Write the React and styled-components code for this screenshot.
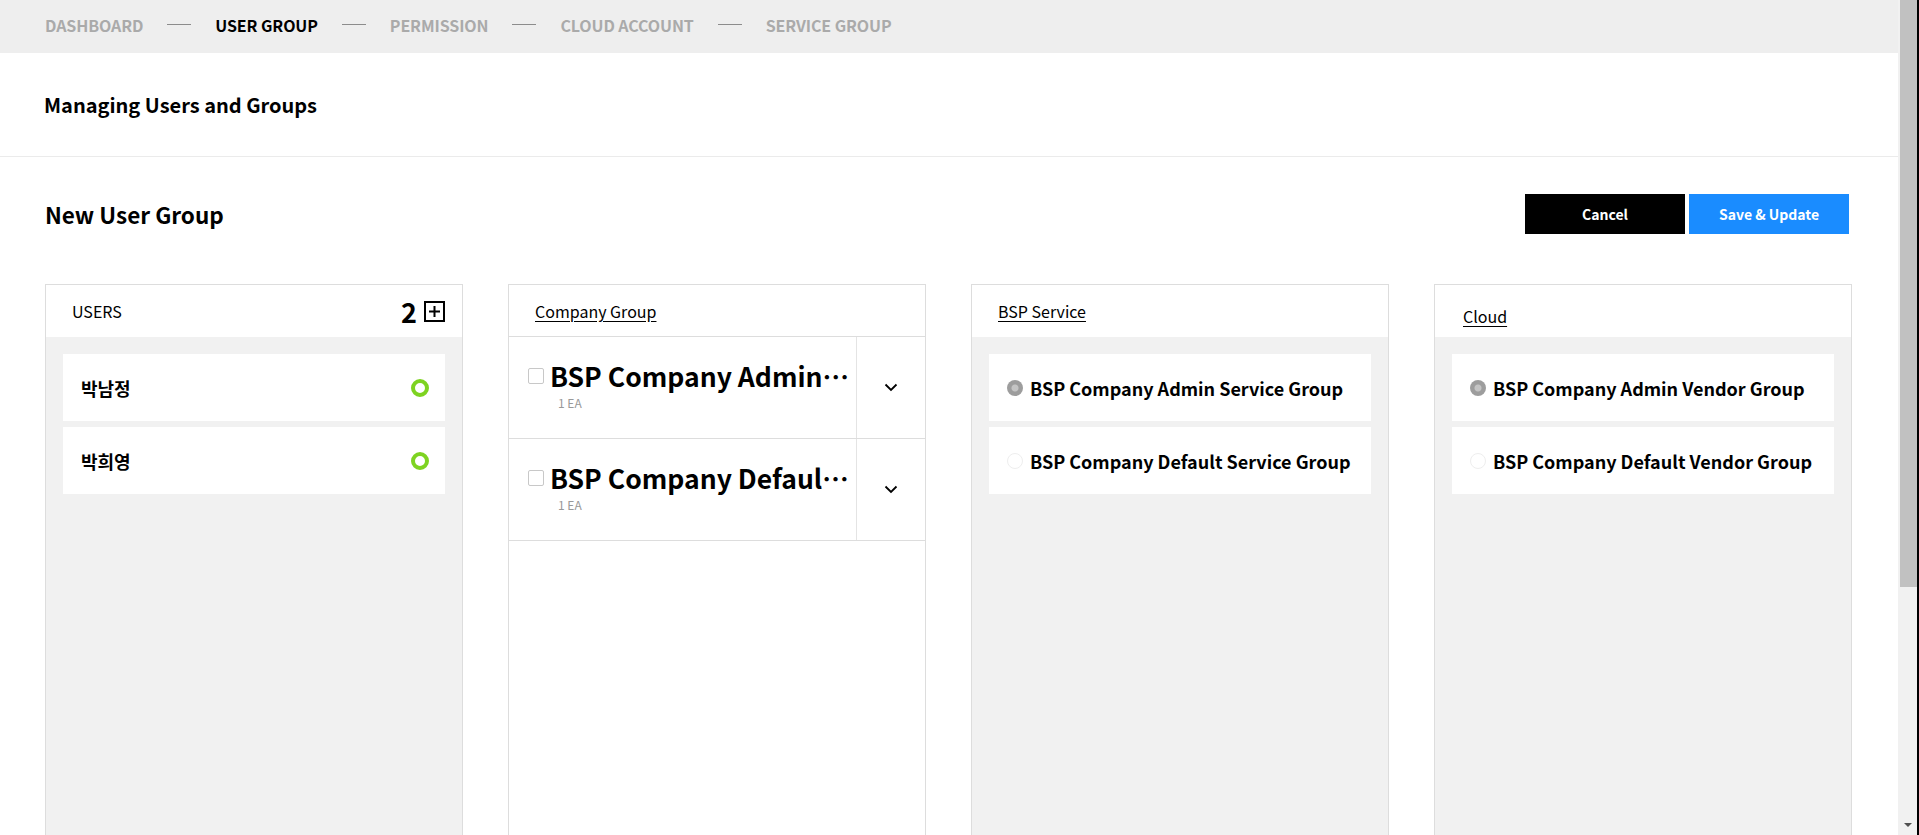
import React from 'react';
import styled, { createGlobalStyle } from 'styled-components';

const Global = createGlobalStyle`
  body {
    margin: 0;
    font-family: "Noto Sans CJK KR", "Noto Sans", sans-serif;
    color: #000;
    background: #fff;
    overflow-x: hidden;
  }
`;

const Page = styled.div`
  width: 1898px;
`;

const Nav = styled.nav`
  display: flex;
  align-items: center;
  gap: 24px;
  height: 53px;
  box-sizing: border-box;
  padding: 0 0 4px 45px;
  background: #eeeeee;
`;

const NavItem = styled.span`
  font-size: 16px;
  font-weight: 700;
  letter-spacing: -0.1px;
  color: ${p => (p.active ? '#000' : '#aaaaaa')};
`;

const NavDash = styled.span`
  width: 24px;
  height: 1px;
  background: #8c8c8c;
`;

const PageHeader = styled.header`
  display: flex;
  align-items: center;
  height: 103px;
  padding-left: 44px;
  border-bottom: 1px solid #ebebeb;
`;

const PageTitle = styled.h1`
  margin: 0;
  font-size: 20px;
  font-weight: 700;
`;

const Content = styled.main`
  padding: 37px 46px 60px 45px;
`;

const TitleRow = styled.div`
  display: flex;
  align-items: center;
  justify-content: space-between;
  padding-right: 3px;
`;

const SectionTitle = styled.h2`
  margin: 0;
  font-size: 22.5px;
  font-weight: 700;
`;

const Buttons = styled.div`
  display: flex;
  gap: 4px;
`;

const Button = styled.button`
  width: 160px;
  height: 40px;
  border: 0;
  font-family: inherit;
  font-size: 14px;
  font-weight: 700;
  color: #fff;
  background: ${p => (p.primary ? '#1a8cff' : '#000')};
`;

const Panels = styled.div`
  display: grid;
  grid-template-columns: repeat(4, minmax(0, 1fr));
  gap: 45px;
  margin-top: 50px;
`;

const Panel = styled.section`
  display: flex;
  flex-direction: column;
  height: 1560px;
  border: 1px solid #dddddd;
`;

const PanelHead = styled.div`
  display: flex;
  align-items: center;
  justify-content: space-between;
  height: 52px;
  flex-shrink: 0;
  box-sizing: border-box;
  padding: ${p => (p.low ? '10px 17px 0 28px' : '0 17px 0 26px')};
  border-bottom: ${p => (p.lined ? '1px solid #dddddd' : '0')};
  font-size: 16px;
`;

const HeadLink = styled.span`
  text-decoration: underline;
  text-underline-offset: 3px;
`;

const Counter = styled.div`
  display: flex;
  align-items: center;
  gap: 7px;
  font-size: 27px;
  font-weight: 700;
`;

const AddBox = styled.span`
  display: flex;
  align-items: center;
  justify-content: center;
  width: 17px;
  height: 17px;
  border: 2px solid #000;
`;

const GreyBody = styled.div`
  flex: 1;
  display: flex;
  flex-direction: column;
  gap: 6px;
  padding: 17px;
  background: #f1f1f1;
`;

const Card = styled.div`
  display: flex;
  align-items: center;
  justify-content: space-between;
  height: 67px;
  padding: 0 16px 0 18px;
  background: #fff;
  font-size: 18px;
  font-weight: 700;
`;

const Ring = styled.span`
  width: 10px;
  height: 10px;
  border: 4px solid #7ed321;
  border-radius: 50%;
`;

const RadioLine = styled.label`
  display: flex;
  align-items: center;
  gap: 7px;
  font-size: 18px;
  font-weight: 700;
  white-space: nowrap;
`;

const Radio = styled.span`
  flex-shrink: 0;
  width: 16px;
  height: 16px;
  border-radius: 50%;
  box-sizing: border-box;
  background: ${p =>
    p.checked
      ? 'radial-gradient(circle, #c4c4c4 0 3px, #9d9d9d 4px)'
      : '#fff'};
  border: ${p => (p.checked ? '0' : '1px solid #eeeeee')};
`;

const GroupRow = styled.div`
  display: flex;
  height: 101px;
  flex-shrink: 0;
  border-bottom: 1px solid #dddddd;
`;

const GroupMain = styled.div`
  flex: 1;
  min-width: 0;
  padding: 19px 2px 0 19px;
`;

const GroupLine = styled.div`
  display: flex;
  align-items: center;
  gap: 6px;
`;

const Check = styled.span`
  flex-shrink: 0;
  width: 14px;
  height: 14px;
  border: 1px solid #c8c8c8;
  border-radius: 2px;
`;

const GroupName = styled.span`
  font-size: 26.5px;
  font-weight: 700;
  line-height: 40px;
  white-space: nowrap;
  overflow: hidden;
  text-overflow: ellipsis;
`;

const GroupCount = styled.div`
  margin-left: 30px;
  font-size: 12px;
  line-height: 14px;
  color: #999999;
`;

const Toggle = styled.div`
  display: flex;
  align-items: center;
  justify-content: center;
  width: 68px;
  flex-shrink: 0;
  border-left: 1px solid #e4e4e4;
`;

/* browser scrollbar seen on the right edge of the capture */
const ScrollTrack = styled.div`
  position: fixed;
  top: 0;
  right: 0;
  bottom: 0;
  width: 21px;
  display: flex;
  flex-direction: column;
  justify-content: space-between;
  box-sizing: border-box;
  padding-left: 2px;
  background: #f1f1f1;
  border-right: 2px solid #000;
`;

const ScrollThumb = styled.div`
  height: 587px;
  background: #c1c1c1;
`;

const ScrollArrow = styled.div`
  align-self: center;
  margin: 0 0 8px -2px;
  width: 0;
  height: 0;
  border-left: 4px solid transparent;
  border-right: 4px solid transparent;
  border-top: 4px solid #505050;
`;

const navItems = ['DASHBOARD', 'USER GROUP', 'PERMISSION', 'CLOUD ACCOUNT', 'SERVICE GROUP'];
const users = ['박남정', '박희영'];
const groups = ['BSP Company Admin Group', 'BSP Company Default Group'];

function Chevron() {
  return (
    <svg width="14" height="9" viewBox="0 0 14 9">
      <path d="M1.5 1.5 L7 7 L12.5 1.5" fill="none" stroke="#000" strokeWidth="1.8" />
    </svg>
  );
}

function RadioPanel({ title, items, low }) {
  return (
    <Panel>
      <PanelHead low={low}>
        <HeadLink>{title}</HeadLink>
      </PanelHead>
      <GreyBody>
        {items.map((item, i) => (
          <Card key={item}>
            <RadioLine>
              <Radio checked={i === 0} />
              {item}
            </RadioLine>
          </Card>
        ))}
      </GreyBody>
    </Panel>
  );
}

export default function App() {
  return (
    <>
      <Global />
      <Page>
        <Nav>
          {navItems.map((item, i) => (
            <React.Fragment key={item}>
              {i > 0 && <NavDash />}
              <NavItem active={item === 'USER GROUP'}>{item}</NavItem>
            </React.Fragment>
          ))}
        </Nav>
        <PageHeader>
          <PageTitle>Managing Users and Groups</PageTitle>
        </PageHeader>
        <Content>
          <TitleRow>
            <SectionTitle>New User Group</SectionTitle>
            <Buttons>
              <Button>Cancel</Button>
              <Button primary>Save &amp; Update</Button>
            </Buttons>
          </TitleRow>
          <Panels>
            <Panel>
              <PanelHead>
                <span>USERS</span>
                <Counter>
                  2
                  <AddBox>
                    <svg width="11" height="11" viewBox="0 0 11 11">
                      <path d="M5.5 0 V11 M0 5.5 H11" stroke="#000" strokeWidth="2" />
                    </svg>
                  </AddBox>
                </Counter>
              </PanelHead>
              <GreyBody>
                {users.map(u => (
                  <Card key={u}>
                    {u}
                    <Ring />
                  </Card>
                ))}
              </GreyBody>
            </Panel>
            <Panel>
              <PanelHead lined>
                <HeadLink>Company Group</HeadLink>
              </PanelHead>
              {groups.map(g => (
                <GroupRow key={g}>
                  <GroupMain>
                    <GroupLine>
                      <Check />
                      <GroupName>{g}</GroupName>
                    </GroupLine>
                    <GroupCount>1 EA</GroupCount>
                  </GroupMain>
                  <Toggle>
                    <Chevron />
                  </Toggle>
                </GroupRow>
              ))}
            </Panel>
            <RadioPanel
              title="BSP Service"
              items={['BSP Company Admin Service Group', 'BSP Company Default Service Group']}
            />
            <RadioPanel
              low
              title="Cloud"
              items={['BSP Company Admin Vendor Group', 'BSP Company Default Vendor Group']}
            />
          </Panels>
        </Content>
      </Page>
      <ScrollTrack>
        <ScrollThumb />
        <ScrollArrow />
      </ScrollTrack>
    </>
  );
}
